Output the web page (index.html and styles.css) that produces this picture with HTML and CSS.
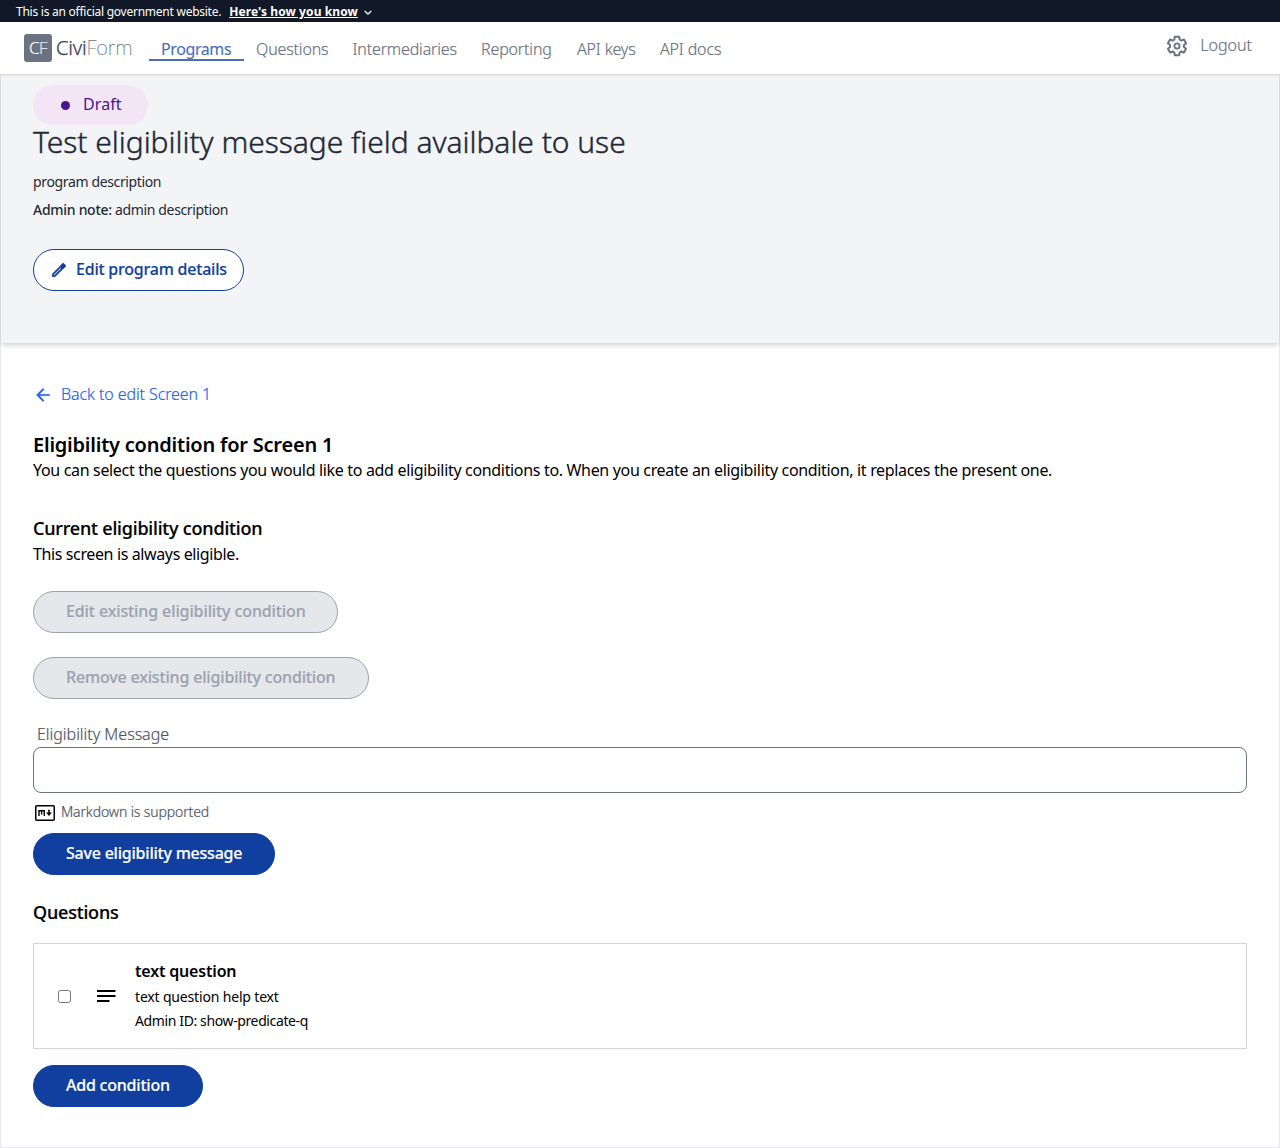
FILE: index.html
```
<!DOCTYPE html>
<html lang="en">
<head>
<meta charset="utf-8">
<title>CiviForm - Eligibility condition</title>
<link rel="stylesheet" href="styles.css">
</head>
<body>
<div class="banner">
  <span>This is an official government website.</span>
  <a class="banner-link">Here's how you know</a>
  <svg class="chevron" viewBox="0 0 8 6"><path d="M.8 1l3.2 3.2L7.2 1" fill="none" stroke="currentColor" stroke-width="1.3"/></svg>
</div>
<header class="topbar">
  <div class="logo"><span class="logo-box">C<span class="logo-f">F</span></span></div>
  <div class="brand"><span class="brand-civi">Civi</span><span class="brand-form">Form</span></div>
  <nav class="nav">
    <a class="nav-item active">Programs</a>
    <a class="nav-item questions">Questions</a>
    <a class="nav-item intermediaries">Intermediaries</a>
    <a class="nav-item reporting">Reporting</a>
    <a class="nav-item keys">API keys</a>
    <a class="nav-item docs">API docs</a>
  </nav>
  <div class="account">
    <svg class="gear" viewBox="0 0 24 24"><path fill="currentColor" d="M13.85 22.25h-3.7c-.74 0-1.36-.54-1.45-1.27l-.27-1.89c-.27-.14-.53-.29-.79-.46l-1.8.72c-.7.26-1.47-.03-1.81-.65L2.2 15.53c-.35-.66-.2-1.44.36-1.88l1.53-1.19c-.01-.15-.02-.3-.02-.46 0-.15.01-.31.02-.46l-1.52-1.19c-.59-.45-.74-1.26-.37-1.88l1.85-3.19c.34-.62 1.11-.9 1.79-.63l1.81.73c.26-.17.52-.32.78-.46l.27-1.91c.09-.7.71-1.25 1.44-1.25h3.7c.74 0 1.36.54 1.45 1.27l.27 1.89c.27.14.53.29.79.46l1.8-.72c.71-.26 1.48.03 1.82.65l1.84 3.18c.36.66.2 1.44-.36 1.88l-1.52 1.19c.01.15.02.3.02.46s-.01.31-.02.46l1.52 1.19c.56.45.72 1.23.37 1.86l-1.86 3.22c-.34.62-1.11.9-1.8.63l-1.8-.72c-.26.17-.52.32-.78.46l-.27 1.91c-.1.68-.72 1.22-1.46 1.22zm-3.23-2h2.76l.37-2.55.53-.22c.44-.18.88-.44 1.34-.78l.45-.34 2.38.96 1.38-2.4-2.03-1.58.07-.56c.03-.26.06-.51.06-.78s-.03-.53-.06-.78l-.07-.56 2.03-1.58-1.39-2.4-2.39.96-.45-.35c-.42-.32-.87-.58-1.33-.77l-.52-.22-.37-2.55h-2.76l-.37 2.55-.53.21c-.44.19-.88.44-1.34.79l-.45.33-2.38-.95-1.39 2.39 2.03 1.58-.07.56a7 7 0 0 0-.06.79c0 .26.02.53.06.78l.07.56-2.03 1.58 1.38 2.4 2.39-.96.45.35c.43.33.86.58 1.33.77l.53.22.38 2.55z"/><circle cx="12" cy="12" r="2.6" fill="none" stroke="currentColor" stroke-width="1.8"/></svg>
    <a>Logout</a>
  </div>
</header>
<main class="page">
  <section class="program">
    <div class="status"><span class="dot"></span><span>Draft</span></div>
    <h1 class="title">Test eligibility message field availbale to use</h1>
    <p class="description">program description</p>
    <p class="note"><span class="note-label">Admin note:</span> admin description</p>
    <button class="btn outline"><svg class="pencil" viewBox="0 0 24 24"><path fill="currentColor" stroke="currentColor" stroke-width=".7" d="M14.06 9.02l.92.92L5.92 19H5v-.92l9.06-9.06M17.66 3c-.25 0-.51.1-.7.29l-1.83 1.83 3.75 3.75 1.83-1.83c.39-.39.39-1.02 0-1.41l-2.34-2.34c-.2-.2-.45-.29-.71-.29zm-3.6 3.19L3 17.25V21h3.75L17.81 9.94l-3.75-3.75z"/><path fill="currentColor" d="M17 3l4 4-3.5 3.5-4-4z"/></svg><span>Edit program details</span></button>
  </section>
  <section class="content">
    <a class="back"><svg class="arrow" viewBox="0 0 24 24"><path fill="currentColor" stroke="currentColor" stroke-width=".3" d="M20 11H7.83l5.59-5.59L12 4l-8 8 8 8 1.41-1.41L7.83 13H20v-2z"/></svg><span>Back to edit Screen 1</span></a>
    <h2 class="heading">Eligibility condition for Screen 1</h2>
    <p class="text">You can select the questions you would like to add eligibility conditions to. When you create an eligibility condition, it replaces the present one.</p>
    <h3 class="subheading current">Current eligibility condition</h3>
    <p class="text eligible">This screen is always eligible.</p>
    <button class="btn disabled edit" disabled>Edit existing eligibility condition</button>
    <button class="btn disabled remove" disabled>Remove existing eligibility condition</button>
    <label class="field-label" for="message">Eligibility Message</label>
    <input class="field" id="message" type="text">
    <div class="markdown"><svg class="md" viewBox="0 0 20 16"><rect x=".75" y=".75" width="18.5" height="14.5" rx="1" fill="none" stroke="#000" stroke-width="1.5"/><path d="M4 11V5.7h5.3V11M6.65 5.7v3.8" fill="none" stroke="#000" stroke-width="1.4"/><path d="M14 4.8v4" stroke="#000" stroke-width="1.6"/><path d="M11 7.6h6l-3 3.4z"/></svg><span>Markdown is supported</span></div>
    <button class="btn primary save">Save eligibility message</button>
    <h3 class="subheading questions-title">Questions</h3>
    <div class="card">
      <input class="check" type="checkbox" aria-label="text question">
      <svg class="lines" viewBox="0 0 20 14"><path d="M1 2h18.5M1 7h18.5M1 12h12.5" stroke="#000" stroke-width="2.2"/></svg>
      <div class="question">
        <div class="q-name">text question</div>
        <div class="q-text help">text question help text</div>
        <div class="q-text">Admin ID: show-predicate-q</div>
      </div>
    </div>
    <button class="btn primary add">Add condition</button>
  </section>
</main>
</body>
</html>
```
FILE: styles.css
```
* { box-sizing: border-box; }
body { margin: 0; background: #fff; color: #000; font: 400 16px/24px "Noto Sans", sans-serif; letter-spacing: -.33px; }
h1, h2, h3, p { margin: 0; }
button, input { font: inherit; letter-spacing: inherit; }
a { text-decoration: none; }

.banner { display: flex; align-items: center; height: 22px; padding: 2px 16px 0; background: #111827; color: #fff; font-size: 12px; line-height: 20px; letter-spacing: -.25px; white-space: nowrap; }
.banner-link { margin-left: 8px; font-weight: 700; letter-spacing: .09px; text-decoration: underline; text-underline-offset: 1px; }
.chevron { width: 8px; height: 6px; margin: 1px 0 0 6px; }

.topbar { position: relative; display: flex; height: 52px; padding: 0 28px 0 24px; background: #fff; color: #6b7280; font-weight: 300; letter-spacing: -.15px; box-shadow: 0 1px 3px rgba(0,0,0,.1), 0 1px 2px rgba(0,0,0,.06); white-space: nowrap; }
.logo { padding-top: 12px; }
.logo-box { display: block; width: 28px; height: 28px; border-radius: 3px; background: #6b7280; color: #fff; font-size: 17px; line-height: 27px; letter-spacing: -.6px; text-align: center; -webkit-text-stroke: .2px; }
.logo-f { font-weight: 200; }
.brand { width: 77px; margin: 12px 0 0 4px; font-size: 20px; line-height: 28px; }
.brand-civi { color: #374151; letter-spacing: -.2px; -webkit-text-stroke: .25px; }
.brand-form { font-weight: 200; letter-spacing: -.1px; }
.nav { display: flex; align-items: flex-start; gap: 24px; padding-top: 15px; margin-left: 16px; -webkit-text-stroke: .2px; }
.nav-item.active { width: 95px; height: 24px; margin-right: -12px; padding-left: 12px; border-bottom: 2px solid #4a6eb9; color: #4a6eb9; font-weight: 400; letter-spacing: -.4px; -webkit-text-stroke: .1px; }
.questions { width: 72.5px; }
.intermediaries { width: 104.5px; }
.reporting { width: 72px; }
.keys { width: 59px; }
.account { display: flex; gap: 11px; margin: 11px 0 0 auto; letter-spacing: 0; -webkit-text-stroke: .2px; }
.gear { width: 24px; height: 24px; margin-top: 1px; }

.page { height: 1074px; border: 1px solid #e5e7eb; border-top: 0; }
.program { height: 269px; padding: 11px 32px 0; background: #f3f4f6; color: #1f2937; box-shadow: 0 4px 6px -1px rgba(0,0,0,.1), 0 2px 4px -1px rgba(0,0,0,.1); }
.status { display: flex; align-items: center; width: 115px; height: 40px; padding: 0 0 2px 27.5px; border-radius: 20px; background: #f3e5f5; color: #4a148c; letter-spacing: .1px; }
.dot { width: 9px; height: 9px; margin: 2px 13.5px 0 0; border-radius: 50%; background: #4a148c; }
.title { margin-top: -1px; font-size: 30px; line-height: 36px; font-weight: 300; letter-spacing: -.035px; -webkit-text-stroke: .4px; }
.description, .note { font-size: 14px; line-height: 20px; letter-spacing: -.36px; }
.description { margin-top: 12px; }
.note { margin-top: 8px; }
.note-label { font-weight: 500; letter-spacing: -.28px; }

.btn { display: flex; align-items: center; height: 42px; padding: 0 32px 2px; border: 1px solid #113f9f; border-radius: 21px; font-weight: 500; letter-spacing: -.22px; white-space: nowrap; -webkit-text-stroke: .15px; }
.outline { width: 211px; margin-top: 29px; padding: 0 0 2px 17px; background: #fff; color: #113f9f; }
.pencil { width: 18px; height: 18px; margin: 2px 8px 0 -1px; }
.primary { background: #113f9f; color: #fff; }
.disabled { border-color: #9ca3af; background: #e5e7eb; color: #9ca3af; }

.content { display: flex; flex-direction: column; align-items: flex-start; padding: 39px 32px 0; }
.back { display: flex; align-items: center; color: #2563eb; font-weight: 300; letter-spacing: -.09px; -webkit-text-stroke: .2px; }
.arrow { width: 20px; height: 20px; margin: 2px 8px 0 0; }
.heading { margin-top: 25px; font-size: 20px; line-height: 28px; font-weight: 600; letter-spacing: -.22px; }
.text { margin-top: -1px; white-space: nowrap; }
.eligible { margin-top: 0; letter-spacing: -.38px; }
.subheading { font-size: 18px; line-height: 28px; font-weight: 500; letter-spacing: -.19px; -webkit-text-stroke: .2px; }
.current { margin-top: 32px; }
.edit { width: 305px; margin-top: 25px; letter-spacing: -.11px; }
.remove { width: 336px; margin-top: 24px; letter-spacing: -.17px; }
.field-label { margin: 23px 0 0 4px; color: #4b5563; font-weight: 300; letter-spacing: -.01px; -webkit-text-stroke: .2px; }
.field { width: 100%; height: 46px; margin-top: 1px; padding: 0 12px; border: 1px solid #6b7280; border-radius: 8px; background: #fff; }
.markdown { display: flex; height: 20px; margin: 9px 0 0 2px; color: #4b5563; font-size: 14px; line-height: 20px; font-weight: 300; letter-spacing: -.12px; -webkit-text-stroke: .2px; }
.md { width: 20px; height: 16px; margin: 3px 6px 0 0; }
.save { width: 242px; margin-top: 11px; }
.questions-title { margin-top: 23px; }
.card { display: flex; width: 100%; height: 106px; margin-top: 17px; padding: 15px 24px; border: 1px solid #d1d5db; }
.check { width: 13px; height: 13px; margin: 31px 0 0; }
.lines { width: 20px; height: 14px; margin: 30px 19px 0 25px; }
.q-name { font-weight: 600; letter-spacing: -.18px; }
.q-text { margin-top: 4px; font-size: 14px; line-height: 20px; letter-spacing: -.38px; }
.help { letter-spacing: -.17px; }
.add { width: 170px; margin-top: 16px; }
```
